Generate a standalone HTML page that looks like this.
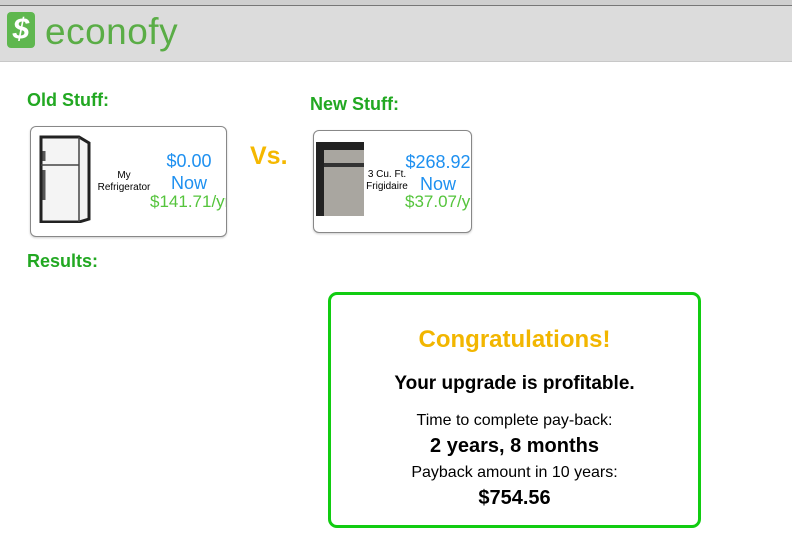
<!DOCTYPE html>
<html><head><style>
body{margin:0;width:792px;height:543px;background:#fff;font-family:"Liberation Sans",Arial,sans-serif;position:relative;overflow:hidden}
.a{position:absolute}
.h{color:#22a822;font-weight:bold;font-size:18px}
.card{position:absolute;border:1px solid #888;border-radius:6px;background:#fff;box-shadow:0 1px 2px rgba(0,0,0,.2)}
.c{text-align:center}
</style></head><body>
<div class="a" style="left:0;top:0;width:792px;height:5px;background:#cfcfcf"></div>
<div class="a" style="left:0;top:5px;width:792px;height:1px;background:#777"></div>
<div class="a" style="left:0;top:6px;width:792px;height:55px;background:#dcdcdc;border-bottom:1px solid #c8c8c8"></div>
<div class="a" style="left:7px;top:12px;width:28px;height:36px;background:#5fb74f;border-radius:4px;color:#fff;font-size:30px;font-weight:bold;font-style:italic;text-align:center;line-height:36px">$</div>
<div class="a" style="left:45px;top:10px;font-size:37px;color:#5aad46;font-family:'Liberation Sans',sans-serif;letter-spacing:0.5px;line-height:44px">econofy</div>

<div class="a h" style="left:27px;top:90px">Old Stuff:</div>
<div class="a h" style="left:310px;top:94px">New Stuff:</div>
<div class="a h" style="left:27px;top:251px">Results:</div>
<div class="a" style="left:250px;top:142px;font-size:25px;font-weight:bold;color:#f5b800">Vs.</div>

<div class="card" style="left:30px;top:126px;width:195px;height:109px">
 <svg class="a" style="left:6px;top:8px" width="54" height="88" viewBox="0 0 54 88"><path d="M4 2h38l10 6v76l-10 3H4z" fill="#f4f4f4" stroke="#222" stroke-width="3"/><path d="M42 2v85M4 30h38" stroke="#444" stroke-width="1.5" fill="none"/><path d="M7 16v10M7 35v30" stroke="#555" stroke-width="3"/></svg>
 <div class="a c" style="left:58px;top:43px;width:70px;font-size:10px;line-height:12px">My<br>Refrigerator</div>
 <div class="a c" style="left:118px;top:23px;width:80px;font-size:18px;color:#1e90f0;line-height:22px">$0.00<br>Now</div>
 <div class="a" style="left:119px;top:65px;font-size:17px;color:#55c43c;white-space:nowrap;width:76px;overflow:hidden">$141.71/yr</div>
</div>

<div class="card" style="left:313px;top:130px;width:157px;height:101px">
 <svg class="a" style="left:1px;top:10px" width="50" height="76"><rect x="1" y="1" width="48" height="74" fill="#a9a6a0"/><rect x="1" y="1" width="8" height="74" fill="#222"/><rect x="1" y="1" width="48" height="8" fill="#222"/><rect x="9" y="22" width="40" height="4" fill="#333"/></svg>
 <div class="a c" style="left:48px;top:38px;width:50px;font-size:10px;line-height:12px">3 Cu. Ft.<br>Frigidaire</div>
 <div class="a c" style="left:86px;top:20px;width:76px;font-size:18px;color:#1e90f0;line-height:22px">$268.92<br>Now</div>
 <div class="a" style="left:91px;top:61px;font-size:17px;color:#55c43c;white-space:nowrap;width:66px;overflow:hidden">$37.07/yr</div>
</div>

<div class="a" style="left:328px;top:292px;width:367px;height:230px;border:3px solid #11cc11;border-radius:9px">
 <div class="a c" style="left:0;top:31px;width:367px;font-size:24px;font-weight:bold;color:#f2b600">Congratulations!</div>
 <div class="a c" style="left:0;top:78px;width:367px;font-size:19px;font-weight:bold">Your upgrade is profitable.</div>
 <div class="a c" style="left:0;top:117px;width:367px;font-size:16px">Time to complete pay-back:</div>
 <div class="a c" style="left:0;top:140px;width:367px;font-size:20px;font-weight:bold">2 years, 8 months</div>
 <div class="a c" style="left:0;top:169px;width:367px;font-size:16px">Payback amount in 10 years:</div>
 <div class="a c" style="left:0;top:192px;width:367px;font-size:20px;font-weight:bold">$754.56</div>
</div>
</body></html>
